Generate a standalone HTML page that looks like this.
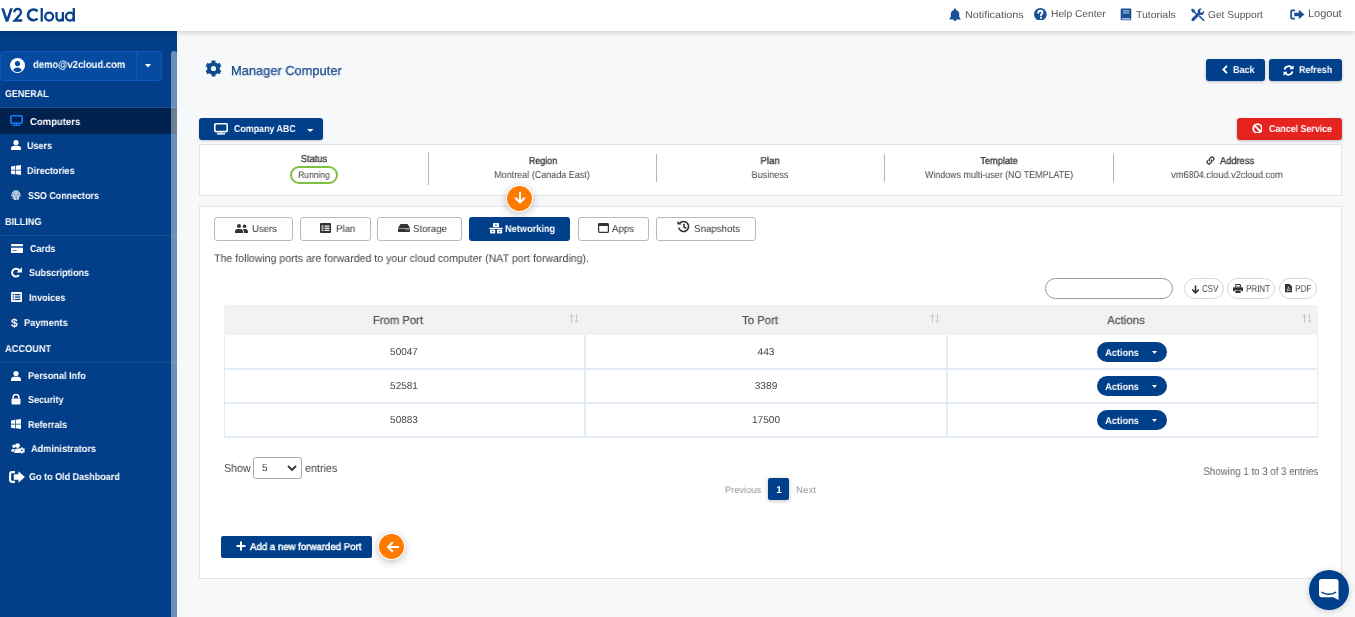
<!DOCTYPE html>
<html><head><meta charset="utf-8"><style>
html,body{margin:0;padding:0;}
body{width:1355px;height:617px;overflow:hidden;position:relative;background:#f7f8fa;font-family:"Liberation Sans", sans-serif;}
.t{font-family:"Liberation Sans", sans-serif;text-rendering:geometricPrecision;will-change:transform;}
svg{display:block;}
</style></head><body>
<div style="position:absolute;left:0px;top:0px;width:1355px;height:31px;background:#fff;box-shadow:0 1px 6px rgba(0,0,0,0.2);z-index:2;"></div><div style="position:absolute;left:0;top:0;width:1355px;height:31px;z-index:3;"><svg style="position:absolute;left:0px;top:0px;" width="80" height="31" viewBox="0 0 80 31"><g fill="none" stroke="#08438c" stroke-width="2.3"><path d="M14.3 12.3A3.35 3.35 0 0 1 21 12.2C21 13.6 20.3 14.5 19.3 15.5L14.7 20.5H22.2" stroke-linejoin="miter"/><path d="M37.5 11.3A5.4 5.4 0 1 0 37.5 18.5" stroke-width="2.6"/><circle cx="49.15" cy="16.55" r="3.95"/><path d="M56.5 11.9V17.3A3.2 3.2 0 0 0 62.9 17.3M62.9 11.9V21.6"/><circle cx="69.9" cy="16.55" r="3.95"/><path d="M73.8 8V21.6"/><path d="M41.75 8V21.6"/></g><path fill="#08438c" d="M1.2 8.3H3.9L7 17.4 10.1 8.3H12.8L8.3 21.7H5.7z"/></svg><svg style="position:absolute;left:949px;top:8px;" width="12" height="13" viewBox="0 0 12 13"><path fill="#1b4f96" d="M6 0.5c0.6 0 1 0.4 1 1v0.6c1.9 0.4 3.2 2 3.2 4v2.6l1.3 2v0.8H0.5v-0.8l1.3-2V6.1c0-2 1.3-3.6 3.2-4V1.5c0-0.6 0.4-1 1-1zM4.5 11.4h3c0 0.9-0.7 1.5-1.5 1.5s-1.5-0.6-1.5-1.5z"/></svg><div class="t" id="nav1" style="position:absolute;top:9.54px;font-size:10px;line-height:12.00px;color:#555;font-weight:400;white-space:nowrap;left:964.5px;transform-origin:left center;transform:scaleX(1.0777);">Notifications</div><svg style="position:absolute;left:1034px;top:7.7px;" width="12.7" height="12.7" viewBox="0 0 12 12"><circle cx="6" cy="6" r="6" fill="#1b4f96"/><path d="M4 4.5c0-1.2 0.9-1.9 2-1.9 1.2 0 2 0.8 2 1.7 0 1.3-1.4 1.4-1.4 2.5" stroke="#fff" stroke-width="1.8" fill="none" stroke-linecap="round"/><circle cx="6.6" cy="9.2" r="1" fill="#fff"/></svg><div class="t" id="nav2" style="position:absolute;top:9.04px;font-size:10px;line-height:12.00px;color:#555;font-weight:400;white-space:nowrap;left:1050.5px;transform-origin:left center;transform:scaleX(1.0251);">Help Center</div><svg style="position:absolute;left:1120px;top:7.5px;" width="12" height="13" viewBox="0 0 12 14"><path fill="#1b4f96" d="M1.5 0.5h9.5c0.4 0 0.7 0.3 0.7 0.7v10c0 0.3-0.2 0.5-0.4 0.6v0.9c0.2 0.1 0.4 0.3 0.4 0.6H1.8C0.9 13.3 0.3 12.6 0.3 11.8V1.7C0.3 1 0.8 0.5 1.5 0.5z"/><rect x="2.6" y="2.4" width="7" height="1.3" fill="#9fb6d6"/><rect x="2.6" y="4.6" width="7" height="1.3" fill="#9fb6d6"/><rect x="1.6" y="11.2" width="9" height="1.1" fill="#fff"/></svg><div class="t" id="nav3" style="position:absolute;top:9.54px;font-size:10px;line-height:12.00px;color:#555;font-weight:400;white-space:nowrap;left:1135.7px;transform-origin:left center;transform:scaleX(1.0452);">Tutorials</div><svg style="position:absolute;left:1191px;top:7.5px;" width="14" height="13" viewBox="0 0 14 13"><g fill="#1b4f96"><path d="M1.2 0.5l2.6 1.6 0.3 1.6 3.4 3.4-1 1L3.1 4.7 1.5 4.4 0 1.8z"/><path d="M10.8 0.6c-1.3-0.4-2.8 0-3.6 1.1-0.7 0.9-0.8 2-0.4 3L0.9 10.6c-0.6 0.6-0.6 1.5 0 2.1s1.5 0.6 2.1 0l5.9-5.9c1 0.4 2.1 0.3 3-0.4 1.1-0.8 1.5-2.3 1.1-3.6L11 4.8 9.4 4.4 9 2.8z"/><path d="M7.6 8.4l1.1-1.1 4.6 4.6c0.3 0.3 0.3 0.8 0 1.1s-0.8 0.3-1.1 0z"/></g></svg><div class="t" id="nav4" style="position:absolute;top:9.54px;font-size:10px;line-height:12.00px;color:#555;font-weight:400;white-space:nowrap;left:1208px;transform-origin:left center;transform:scaleX(1.0181);">Get Support</div><svg style="position:absolute;left:1290px;top:8.5px;" width="15" height="11" viewBox="0 0 15 11"><g fill="#1b4f96"><path d="M5 0.5H2C1 0.5 0.3 1.2 0.3 2.2v6.6c0 1 0.7 1.7 1.7 1.7h3V8.8H2.3C2.1 8.8 2 8.6 2 8.4V2.6c0-0.2 0.1-0.4 0.3-0.4H5z"/><path d="M8.8 0.7l5.6 4.8-5.6 4.8V7.3H4.2V3.7h4.6z"/></g></svg><div class="t" id="nav5" style="position:absolute;top:7.59px;font-size:11px;line-height:13.20px;color:#555;font-weight:400;white-space:nowrap;left:1308px;transform-origin:left center;transform:scaleX(0.9864);">Logout</div></div><div style="position:absolute;left:0px;top:31px;width:171px;height:586px;background:#023f88;"></div><div style="position:absolute;left:171px;top:31px;width:6px;height:586px;background:#023f88;"></div><div style="position:absolute;left:0px;top:51px;width:160px;height:28px;background:#064b9f;border:1px solid #0b58b8;border-radius:3px;box-sizing:content-box;"></div><div style="position:absolute;left:136px;top:52px;width:1px;height:28px;background:#0d58b8;"></div><svg style="position:absolute;left:10px;top:57.5px;" width="15" height="15" viewBox="0 0 15 15"><circle cx="7.5" cy="7.5" r="7.5" fill="#fff"/><circle cx="7.5" cy="5.6" r="2.6" fill="#064b9f"/><path d="M3.2 12.2c0.8-1.8 2.4-2.7 4.3-2.7s3.5 0.9 4.3 2.7C10.7 13.3 9.2 14 7.5 14S4.3 13.3 3.2 12.2z" fill="#064b9f"/></svg><div class="t" id="user" style="position:absolute;top:59.06px;font-size:10.5px;line-height:12.60px;color:#fff;font-weight:700;white-space:nowrap;left:33.2px;transform-origin:left center;transform:scaleX(0.9010);">demo@v2cloud.com</div><svg style="position:absolute;left:145px;top:63.5px;" width="6" height="4" viewBox="0 0 6 4"><path d="M0 0h6L3 3.5z" fill="#fff"/></svg><div class="t" id="general" style="position:absolute;top:88.53px;font-size:10px;line-height:12.00px;color:#fff;font-weight:700;white-space:nowrap;left:5.3px;transform-origin:left center;transform:scaleX(0.8915);">GENERAL</div><div style="position:absolute;left:0px;top:107px;width:177px;height:1px;background:rgba(255,255,255,0.10);"></div><div style="position:absolute;left:0px;top:108px;width:177px;height:26px;background:#01224f;"></div><svg style="position:absolute;left:10px;top:115px;" width="13" height="11" viewBox="0 0 13 11"><rect x="0.8" y="0.8" width="11.4" height="7.4" rx="1" fill="none" stroke="#1a7cff" stroke-width="1.6"/><rect x="2.5" y="9.6" width="8" height="1.3" fill="#1a7cff"/><rect x="6" y="8.5" width="1" height="1.5" fill="#1a7cff"/></svg><div class="t" id="s_comp" style="position:absolute;top:116.53px;font-size:10px;line-height:12.00px;color:#fff;font-weight:700;white-space:nowrap;left:30px;transform-origin:left center;transform:scaleX(0.9508);">Computers</div><svg style="position:absolute;left:11px;top:140px;" width="10" height="10" viewBox="0 0 10 10"><circle cx="5" cy="2.6" r="2.6" fill="#fff"/><path d="M0 10V8.6C0 6.9 1.3 5.8 3 5.8h4c1.7 0 3 1.1 3 2.8V10z" fill="#fff"/></svg><div class="t" id="s_users" style="position:absolute;top:140.53px;font-size:10px;line-height:12.00px;color:#fff;font-weight:700;white-space:nowrap;left:27.3px;transform-origin:left center;transform:scaleX(0.9025);">Users</div><svg style="position:absolute;left:11px;top:165px;" width="10" height="10" viewBox="0 0 10 10"><path fill="#fff" d="M0 1.4l4.1-0.6v4H0zM4.8 0.7L10 0v4.8H4.8zM0 5.4h4.1v4L0 8.8zM4.8 5.4H10V10l-5.2-0.7z"/></svg><div class="t" id="s_dir" style="position:absolute;top:165.53px;font-size:10px;line-height:12.00px;color:#fff;font-weight:700;white-space:nowrap;left:27.3px;transform-origin:left center;transform:scaleX(0.9110);">Directories</div><svg style="position:absolute;left:11px;top:190px;" width="10" height="10" viewBox="0 0 10 10"><g fill="none" stroke="#fff" stroke-width="1" stroke-linecap="round"><path d="M1.2 3.2C2 1.7 3.4 0.8 5 0.8s3 0.9 3.8 2.4"/><path d="M0.8 6C0.8 3.7 2.7 2 5 2s4.2 1.7 4.2 4"/><path d="M2 8.6C2.2 7.8 2.2 6.8 2.2 6c0-1.5 1.2-2.8 2.8-2.8S7.8 4.5 7.8 6c0 1 0 2.2-0.3 3.2"/><path d="M3.4 9.4C3.6 8.4 3.6 7 3.6 6c0-0.8 0.6-1.4 1.4-1.4S6.4 5.2 6.4 6c0 1.2 0 2.6-0.4 3.8"/><path d="M5 6c0 1.4 0 2.6-0.4 3.8"/></g></svg><div class="t" id="s_sso" style="position:absolute;top:190.53px;font-size:10px;line-height:12.00px;color:#fff;font-weight:700;white-space:nowrap;left:28.3px;transform-origin:left center;transform:scaleX(0.8922);">SSO Connectors</div><div class="t" id="billing" style="position:absolute;top:216.53px;font-size:10px;line-height:12.00px;color:#fff;font-weight:700;white-space:nowrap;left:5.3px;transform-origin:left center;transform:scaleX(0.9125);">BILLING</div><div style="position:absolute;left:0px;top:235px;width:177px;height:1px;background:rgba(255,255,255,0.07);"></div><svg style="position:absolute;left:11px;top:244px;" width="12" height="9" viewBox="0 0 12 9"><path fill="#fff" d="M1 0h10c0.6 0 1 0.4 1 1v1.2H0V1c0-0.6 0.4-1 1-1zM0 3.8h12V8c0 0.6-0.4 1-1 1H1C0.4 9 0 8.6 0 8z"/><rect x="1.5" y="6" width="2" height="0.8" fill="#023f88"/><rect x="4" y="6" width="1.5" height="0.8" fill="#023f88"/></svg><div class="t" id="s_cards" style="position:absolute;top:243.53px;font-size:10px;line-height:12.00px;color:#fff;font-weight:700;white-space:nowrap;left:30px;transform-origin:left center;transform:scaleX(0.8956);">Cards</div><svg style="position:absolute;left:11px;top:265.5px;" width="12" height="12" viewBox="0 0 12 12"><path d="M8.38 4.65A3.9 3.9 0 1 0 7.99 9.1" fill="none" stroke="#fff" stroke-width="2"/><path d="M10.9 1.3V6.6H5.6z" fill="#fff"/></svg><div class="t" id="s_subs" style="position:absolute;top:267.54px;font-size:10px;line-height:12.00px;color:#fff;font-weight:700;white-space:nowrap;left:28.5px;transform-origin:left center;transform:scaleX(0.9012);">Subscriptions</div><svg style="position:absolute;left:11px;top:292px;" width="11" height="10" viewBox="0 0 11 10"><rect x="0" y="0" width="11" height="10" rx="1" fill="#fff"/><g fill="#023f88"><rect x="1.6" y="2" width="1.4" height="1.3"/><rect x="3.8" y="2" width="5.6" height="1.3"/><rect x="1.6" y="4.4" width="1.4" height="1.3"/><rect x="3.8" y="4.4" width="5.6" height="1.3"/><rect x="1.6" y="6.8" width="1.4" height="1.3"/><rect x="3.8" y="6.8" width="5.6" height="1.3"/></g></svg><div class="t" id="s_inv" style="position:absolute;top:292.54px;font-size:10px;line-height:12.00px;color:#fff;font-weight:700;white-space:nowrap;left:28.5px;transform-origin:left center;transform:scaleX(0.9068);">Invoices</div><div class="t" id="s_dollar" style="position:absolute;top:315.64px;font-size:12px;line-height:14.40px;color:#fff;font-weight:700;white-space:nowrap;left:11px;">$</div><div class="t" id="s_pay" style="position:absolute;top:317.54px;font-size:10px;line-height:12.00px;color:#fff;font-weight:700;white-space:nowrap;left:24.3px;transform-origin:left center;transform:scaleX(0.9249);">Payments</div><div class="t" id="account" style="position:absolute;top:343.54px;font-size:10px;line-height:12.00px;color:#fff;font-weight:700;white-space:nowrap;left:5.2px;transform-origin:left center;transform:scaleX(0.9220);">ACCOUNT</div><div style="position:absolute;left:0px;top:361.5px;width:177px;height:1px;background:rgba(255,255,255,0.07);"></div><svg style="position:absolute;left:11px;top:371px;" width="10" height="10" viewBox="0 0 10 10"><circle cx="5" cy="2.6" r="2.6" fill="#fff"/><path d="M0 10V8.6C0 6.9 1.3 5.8 3 5.8h4c1.7 0 3 1.1 3 2.8V10z" fill="#fff"/></svg><div class="t" id="s_pi" style="position:absolute;top:370.54px;font-size:10px;line-height:12.00px;color:#fff;font-weight:700;white-space:nowrap;left:27.5px;transform-origin:left center;transform:scaleX(0.9123);">Personal Info</div><svg style="position:absolute;left:11px;top:394px;" width="10" height="11" viewBox="0 0 10 11"><path d="M2.2 4.6V3.2C2.2 1.6 3.4 0.5 5 0.5s2.8 1.1 2.8 2.7v1.4" fill="none" stroke="#fff" stroke-width="1.6"/><rect x="0.5" y="4.6" width="9" height="6" rx="1" fill="#fff"/></svg><div class="t" id="s_sec" style="position:absolute;top:394.54px;font-size:10px;line-height:12.00px;color:#fff;font-weight:700;white-space:nowrap;left:27.5px;transform-origin:left center;transform:scaleX(0.8994);">Security</div><svg style="position:absolute;left:11px;top:419px;" width="10" height="10" viewBox="0 0 10 10"><path fill="#fff" d="M0 1.4l4.1-0.6v4H0zM4.8 0.7L10 0v4.8H4.8zM0 5.4h4.1v4L0 8.8zM4.8 5.4H10V10l-5.2-0.7z"/></svg><div class="t" id="s_ref" style="position:absolute;top:419.54px;font-size:10px;line-height:12.00px;color:#fff;font-weight:700;white-space:nowrap;left:27.5px;transform-origin:left center;transform:scaleX(0.9018);">Referrals</div><svg style="position:absolute;left:10.5px;top:443px;" width="14" height="10.5" viewBox="0 0 14 10.5"><g fill="#fff"><circle cx="3" cy="3.2" r="1.7"/><circle cx="6.6" cy="2.6" r="2.4"/><path d="M0 8.6C0 7 0.9 6 2.2 6h1.6C3.2 6.8 2.9 7.8 2.9 8.8z"/><path d="M3.4 10V8.8c0-1.9 1.2-3.2 3-3.2h1.5c0.8 0 1.4 0.2 1.9 0.6-0.6 0.9-0.9 2-0.6 3.1 0.1 0.3 0.2 0.5 0.3 0.7z"/></g><g transform="translate(10.9 7.4)"><circle r="2.5" fill="#fff"/><g stroke="#fff" stroke-width="1.3"><path d="M0 -3.1V3.1M-2.7 -1.55L2.7 1.55M-2.7 1.55L2.7 -1.55"/></g><circle r="0.8" fill="#023f88"/></g></svg><div class="t" id="s_adm" style="position:absolute;top:443.54px;font-size:10px;line-height:12.00px;color:#fff;font-weight:700;white-space:nowrap;left:31.2px;transform-origin:left center;transform:scaleX(0.9139);">Administrators</div><svg style="position:absolute;left:9px;top:470.5px;" width="16" height="12" viewBox="0 0 16 12"><path d="M6 1.1H3.2C2 1.1 1.1 2 1.1 3.2v5.6c0 1.2 0.9 2.1 2.1 2.1H6" fill="none" stroke="#fff" stroke-width="2.1"/><path fill="#fff" d="M4.8 3.3H9.4V0.2L15.9 6 9.4 11.8V8.7H4.8z"/></svg><div class="t" id="s_old" style="position:absolute;top:471.54px;font-size:10px;line-height:12.00px;color:#fff;font-weight:700;white-space:nowrap;left:29.3px;transform-origin:left center;transform:scaleX(0.9029);">Go to Old Dashboard</div><div style="position:absolute;left:171px;top:51px;width:6px;height:566px;background:rgba(255,255,255,0.42);border-radius:3px 3px 0 0;"></div><svg style="position:absolute;left:205px;top:60px;" width="17" height="17" viewBox="0 0 17 17"><path fill="#0d4a8e" fill-rule="evenodd" d="M5.30 2.96 L6.64 2.38 L6.56 0.43 L10.44 0.43 L10.36 2.38 L11.70 2.96 L12.87 3.83 L14.52 2.79 L16.46 6.14 L14.73 7.05 L14.90 8.50 L14.73 9.95 L16.46 10.86 L14.52 14.21 L12.87 13.17 L11.70 14.04 L10.36 14.62 L10.44 16.57 L6.56 16.57 L6.64 14.62 L5.30 14.04 L4.13 13.17 L2.48 14.21 L0.54 10.86 L2.27 9.95 L2.10 8.50 L2.27 7.05 L0.54 6.14 L2.48 2.79 L4.13 3.83Z M8.5 5.9A2.6 2.6 0 1 0 8.5 11.1A2.6 2.6 0 1 0 8.5 5.9Z"/></svg><div class="t" id="title" style="position:absolute;top:62.70px;font-size:13px;line-height:15.60px;color:#16498c;font-weight:400;white-space:nowrap;-webkit-text-stroke:0.25px #16498c;left:231px;transform-origin:left center;transform:scaleX(0.9884);">Manager Computer</div><div style="position:absolute;left:1206px;top:59px;width:59px;height:22px;background:#003f8a;border-radius:3px;box-shadow:0 1px 3px rgba(0,0,0,0.25);"></div><svg style="position:absolute;left:1222px;top:65px;" width="6" height="9" viewBox="0 0 6 9"><path d="M5 0.8L1.3 4.5 5 8.2" fill="none" stroke="#fff" stroke-width="1.9"/></svg><div class="t" id="back" style="position:absolute;top:64.53px;font-size:10px;line-height:12.00px;color:#fff;font-weight:700;white-space:nowrap;left:1233.2px;transform-origin:left center;transform:scaleX(0.9035);">Back</div><div style="position:absolute;left:1269px;top:59px;width:73px;height:22px;background:#003f8a;border-radius:3px;box-shadow:0 1px 3px rgba(0,0,0,0.25);"></div><svg style="position:absolute;left:1283px;top:64.5px;" width="11" height="11" viewBox="0 0 11 11"><g fill="none" stroke="#fff" stroke-width="1.8"><path d="M1.6 4.6A4 4 0 0 1 9 3.2"/><path d="M9.4 6.4A4 4 0 0 1 2 7.8"/></g><path d="M10.5 0.3v4H6.5z" fill="#fff"/><path d="M0.5 10.7v-4h4z" fill="#fff"/></svg><div class="t" id="refresh" style="position:absolute;top:64.53px;font-size:10px;line-height:12.00px;color:#fff;font-weight:700;white-space:nowrap;left:1299px;transform-origin:left center;transform:scaleX(0.8913);">Refresh</div><div style="position:absolute;left:199px;top:118px;width:124px;height:22px;background:#003f8a;border-radius:3px;box-shadow:0 1px 2px rgba(0,0,0,0.2);"></div><svg style="position:absolute;left:214px;top:123px;" width="14" height="12" viewBox="0 0 14 12"><rect x="0.8" y="0.8" width="12.4" height="7.8" rx="1" fill="none" stroke="#fff" stroke-width="1.6"/><rect x="3" y="10.2" width="8" height="1.4" fill="#fff"/><rect x="6.5" y="9" width="1" height="1.5" fill="#fff"/></svg><div class="t" id="company" style="position:absolute;top:123.53px;font-size:10px;line-height:12.00px;color:#fff;font-weight:700;white-space:nowrap;left:234.2px;transform-origin:left center;transform:scaleX(0.8845);">Company ABC</div><svg style="position:absolute;left:307px;top:128.5px;" width="6.5" height="3" viewBox="0 0 6.5 3"><path d="M0 0h6.5L3.25 3z" fill="#fff"/></svg><div style="position:absolute;left:1237px;top:118px;width:105px;height:22px;background:#e52420;border-radius:3px;box-shadow:0 1px 3px rgba(0,0,0,0.25);"></div><svg style="position:absolute;left:1251.5px;top:122.5px;" width="10.5" height="10.5" viewBox="0 0 10.5 10.5"><circle cx="5.5" cy="5.5" r="4.3" fill="none" stroke="#fff" stroke-width="1.8"/><path d="M2.5 2.5l6 6" stroke="#fff" stroke-width="1.8"/></svg><div class="t" id="cancel" style="position:absolute;top:123.53px;font-size:10px;line-height:12.00px;color:#fff;font-weight:700;white-space:nowrap;left:1268.9px;transform-origin:left center;transform:scaleX(0.8852);">Cancel Service</div><div style="position:absolute;left:199px;top:144px;width:1141px;height:50px;background:#fff;border:1px solid #e4e4e4;"></div><div style="position:absolute;left:428px;top:152px;width:1px;height:33px;background:#b5b5b5;"></div><div style="position:absolute;left:656px;top:154px;width:1px;height:28px;background:#b5b5b5;"></div><div style="position:absolute;left:884px;top:154px;width:1px;height:28px;background:#b5b5b5;"></div><div style="position:absolute;left:1113px;top:154px;width:1px;height:28px;background:#b5b5b5;"></div><div class="t" id="st" style="position:absolute;top:153.53px;font-size:10px;line-height:12.00px;color:#2a2a2a;font-weight:400;white-space:nowrap;-webkit-text-stroke:0.25px #2a2a2a;left:313.85px;transform-origin:center center;transform:translateX(-50%) scaleX(0.9309);">Status</div><div style="position:absolute;left:290px;top:166px;width:48px;height:18px;border:2px solid #7dc142;border-radius:10px;box-sizing:border-box;background:#fff;"></div><div class="t" id="run" style="position:absolute;top:170.01px;font-size:9.5px;line-height:11.40px;color:#444;font-weight:400;white-space:nowrap;left:314.05px;transform-origin:center center;transform:translateX(-50%) scaleX(0.8929);">Running</div><div class="t" id="reg" style="position:absolute;top:155.53px;font-size:10px;line-height:12.00px;color:#2a2a2a;font-weight:400;white-space:nowrap;-webkit-text-stroke:0.25px #2a2a2a;left:542.55px;transform-origin:center center;transform:translateX(-50%) scaleX(0.8895);">Region</div><div class="t" id="reg2" style="position:absolute;top:169.53px;font-size:10px;line-height:12.00px;color:#444;font-weight:400;white-space:nowrap;left:542.4px;transform-origin:center center;transform:translateX(-50%) scaleX(0.9014);">Montreal (Canada East)</div><div class="t" id="plan" style="position:absolute;top:155.53px;font-size:10px;line-height:12.00px;color:#2a2a2a;font-weight:400;white-space:nowrap;-webkit-text-stroke:0.25px #2a2a2a;left:770.4px;transform-origin:center center;transform:translateX(-50%) scaleX(0.9543);">Plan</div><div class="t" id="plan2" style="position:absolute;top:169.53px;font-size:10px;line-height:12.00px;color:#444;font-weight:400;white-space:nowrap;left:770.4px;transform-origin:center center;transform:translateX(-50%) scaleX(0.9143);">Business</div><div class="t" id="tmpl" style="position:absolute;top:155.53px;font-size:10px;line-height:12.00px;color:#2a2a2a;font-weight:400;white-space:nowrap;-webkit-text-stroke:0.25px #2a2a2a;left:999.4px;transform-origin:center center;transform:translateX(-50%) scaleX(0.9241);">Template</div><div class="t" id="tmpl2" style="position:absolute;top:169.53px;font-size:10px;line-height:12.00px;color:#444;font-weight:400;white-space:nowrap;left:998.95px;transform-origin:center center;transform:translateX(-50%) scaleX(0.8910);">Windows multi-user (NO TEMPLATE)</div><svg style="position:absolute;left:1206px;top:156px;" width="9" height="9" viewBox="0 0 9 9"><g fill="none" stroke="#333" stroke-width="1.3"><path d="M3.8 5.2a1.8 1.8 0 0 1 0-2.5l1.3-1.3a1.8 1.8 0 0 1 2.5 2.5l-0.7 0.7"/><path d="M5.2 3.8a1.8 1.8 0 0 1 0 2.5L3.9 7.6a1.8 1.8 0 0 1-2.5-2.5l0.7-0.7"/></g></svg><div class="t" id="addr" style="position:absolute;top:155.53px;font-size:10px;line-height:12.00px;color:#2a2a2a;font-weight:400;white-space:nowrap;-webkit-text-stroke:0.25px #2a2a2a;left:1220.2px;transform-origin:left center;transform:scaleX(0.9295);">Address</div><div class="t" id="addr2" style="position:absolute;top:169.53px;font-size:10px;line-height:12.00px;color:#444;font-weight:400;white-space:nowrap;left:1227.35px;transform-origin:center center;transform:translateX(-50%) scaleX(0.9225);">vm6804.cloud.v2cloud.com</div><div style="position:absolute;left:199px;top:206px;width:1141px;height:371px;background:#fff;border:1px solid #e4e4e4;"></div><div style="position:absolute;left:214px;top:217px;width:79px;height:24px;background:#fff;border:1px solid #b9b9b9;border-radius:3px;box-sizing:border-box;"></div><div style="position:absolute;left:300px;top:217px;width:71px;height:24px;background:#fff;border:1px solid #b9b9b9;border-radius:3px;box-sizing:border-box;"></div><div style="position:absolute;left:377px;top:217px;width:85px;height:24px;background:#fff;border:1px solid #b9b9b9;border-radius:3px;box-sizing:border-box;"></div><div style="position:absolute;left:469px;top:217px;width:101px;height:24px;background:#003f8a;border-radius:3px;box-sizing:border-box;"></div><div style="position:absolute;left:578px;top:217px;width:71px;height:24px;background:#fff;border:1px solid #b9b9b9;border-radius:3px;box-sizing:border-box;"></div><div style="position:absolute;left:656px;top:217px;width:100px;height:24px;background:#fff;border:1px solid #b9b9b9;border-radius:3px;box-sizing:border-box;"></div><svg style="position:absolute;left:235px;top:224px;" width="13" height="9" viewBox="0 0 13 9"><g fill="#333"><circle cx="4" cy="2" r="2"/><circle cx="9.5" cy="2.2" r="1.8"/><path d="M0 9V7.6C0 6 1 5 2.5 5h3C7 5 8 6 8 7.6V9z"/><path d="M8.8 9V7.6c0-1-0.3-1.8-0.9-2.5h2.6c1.4 0 2.5 1 2.5 2.4V9z"/></g></svg><div class="t" id="tab_users" style="position:absolute;top:223.53px;font-size:10px;line-height:12.00px;color:#333;font-weight:400;white-space:nowrap;left:252.2px;transform-origin:left center;transform:scaleX(0.9569);">Users</div><svg style="position:absolute;left:320px;top:223px;" width="11" height="10" viewBox="0 0 11 10"><rect x="0" y="0" width="11" height="10" rx="1" fill="#333"/><g fill="#fff"><rect x="1.5" y="2.5" width="2" height="1.2"/><rect x="4.5" y="2.5" width="5" height="1.2"/><rect x="1.5" y="4.6" width="2" height="1.2"/><rect x="4.5" y="4.6" width="5" height="1.2"/><rect x="1.5" y="6.7" width="2" height="1.2"/><rect x="4.5" y="6.7" width="5" height="1.2"/></g></svg><div class="t" id="tab_plan" style="position:absolute;top:223.53px;font-size:10px;line-height:12.00px;color:#333;font-weight:400;white-space:nowrap;left:335.6px;transform-origin:left center;transform:scaleX(0.9593);">Plan</div><svg style="position:absolute;left:398px;top:224px;" width="12" height="8" viewBox="0 0 12 8"><path fill="#333" d="M2.5 0h7L12 4v3c0 0.6-0.4 1-1 1H1C0.4 8 0 7.6 0 7V4z"/><rect x="8" y="5.3" width="0.9" height="0.9" fill="#fff"/><rect x="9.8" y="5.3" width="0.9" height="0.9" fill="#fff"/><rect x="0" y="4" width="12" height="0.5" fill="#fff"/></svg><div class="t" id="tab_storage" style="position:absolute;top:223.53px;font-size:10px;line-height:12.00px;color:#333;font-weight:400;white-space:nowrap;left:412.6px;transform-origin:left center;transform:scaleX(0.9706);">Storage</div><svg style="position:absolute;left:489px;top:222px;" width="14" height="12" viewBox="0 0 14 12"><g fill="#fff"><rect x="4" y="1" width="6" height="4.2" rx="0.6"/><rect x="0.2" y="5.7" width="13.6" height="1.3" rx="0.5"/><rect x="1" y="7.5" width="5.2" height="3.9" rx="0.6"/><rect x="8" y="7.5" width="5.2" height="3.9" rx="0.6"/></g><g fill="#003f8a"><ellipse cx="7" cy="3" rx="1.1" ry="0.6"/><circle cx="3.6" cy="9.6" r="0.7"/><circle cx="10.6" cy="9.6" r="0.7"/></g></svg><div class="t" id="tab_net" style="position:absolute;top:223.53px;font-size:10px;line-height:12.00px;color:#fff;font-weight:700;white-space:nowrap;left:505.2px;transform-origin:left center;transform:scaleX(0.9201);">Networking</div><svg style="position:absolute;left:598px;top:223px;" width="11" height="10" viewBox="0 0 11 10"><rect x="0.6" y="0.6" width="9.8" height="8.8" rx="1" fill="none" stroke="#333" stroke-width="1.2"/><rect x="0.6" y="0.6" width="9.8" height="2.4" fill="#333"/></svg><div class="t" id="tab_apps" style="position:absolute;top:223.53px;font-size:10px;line-height:12.00px;color:#333;font-weight:400;white-space:nowrap;left:612px;transform-origin:left center;transform:scaleX(0.9694);">Apps</div><svg style="position:absolute;left:677.3px;top:219.9px;" width="13" height="13" viewBox="0 0 13 13"><g fill="none" stroke="#333" stroke-width="1.6"><path d="M2.6 3.4A5 5 0 1 1 1.7 7.6"/><path d="M7 3.8v3.2l2.2 1.4"/></g><path d="M0.4 0.9l4.2 3.6H0.4z" fill="#333"/></svg><div class="t" id="tab_snap" style="position:absolute;top:223.53px;font-size:10px;line-height:12.00px;color:#333;font-weight:400;white-space:nowrap;left:694.3px;transform-origin:left center;transform:scaleX(0.9732);">Snapshots</div><div style="position:absolute;left:505.6px;top:184.7px;width:27.8px;height:27.8px;border-radius:50%;background:#fff;box-shadow:0 2px 9px rgba(0,0,0,0.25);"></div><div style="position:absolute;left:507px;top:186.1px;width:25px;height:25px;border-radius:50%;background:#ff7a00;"></div><svg style="position:absolute;left:513.5px;top:192px;" width="12" height="12" viewBox="0 0 12 12"><path d="M6 1v9.5M1.8 6.3L6 10.5l4.2-4.2" fill="none" stroke="#fff" stroke-width="2.1" stroke-linecap="round" stroke-linejoin="round"/></svg><div class="t" id="desc" style="position:absolute;top:252.59px;font-size:11px;line-height:13.20px;color:#444;font-weight:400;white-space:nowrap;left:214.2px;transform-origin:left center;transform:scaleX(0.9639);">The following ports are forwarded to your cloud computer (NAT port forwarding).</div><div style="position:absolute;left:1045px;top:278px;width:128px;height:21px;border:1px solid #999;border-radius:11px;box-sizing:border-box;background:#fff;"></div><div style="position:absolute;left:1184px;top:278px;width:40px;height:21px;border:1px solid #d6d6d6;border-radius:11px;box-sizing:border-box;background:#fff;"></div><div style="position:absolute;left:1227px;top:278px;width:48px;height:21px;border:1px solid #d6d6d6;border-radius:11px;box-sizing:border-box;background:#fff;"></div><div style="position:absolute;left:1279px;top:278px;width:38px;height:21px;border:1px solid #d6d6d6;border-radius:11px;box-sizing:border-box;background:#fff;"></div><svg style="position:absolute;left:1190.5px;top:284.5px;" width="9" height="9" viewBox="0 0 9 9"><path d="M4.5 0.5v7.2M1.2 4.5l3.3 3.3 3.3-3.3" fill="none" stroke="#333" stroke-width="1.6"/></svg><div class="t" id="csv" style="position:absolute;top:283.54px;font-size:10px;line-height:12.00px;color:#444;font-weight:400;white-space:nowrap;left:1202.3px;transform-origin:left center;transform:scaleX(0.7878);">CSV</div><svg style="position:absolute;left:1233px;top:284px;" width="10" height="9" viewBox="0 0 10 9"><g fill="#333"><path d="M2.3 0h4.8L8 0.9V3H2.3z"/><path d="M1 3.2h8c0.6 0 1 0.4 1 1v3H8.3V6H1.7v1.2H0v-3c0-0.6 0.4-1 1-1z"/><rect x="2.4" y="6.4" width="5.2" height="2.6"/></g><rect x="3.2" y="1" width="3.6" height="1.6" fill="#fff"/></svg><div class="t" id="print" style="position:absolute;top:283.54px;font-size:10px;line-height:12.00px;color:#444;font-weight:400;white-space:nowrap;left:1245.9px;transform-origin:left center;transform:scaleX(0.8000);">PRINT</div><svg style="position:absolute;left:1285.2px;top:284.3px;" width="7" height="8.3" viewBox="0 0 7 8.3"><path fill="#333" d="M0 0h4.5L7 2.5V8.3H0z"/><path d="M2 6.8c0.8-1.6 1.2-2.8 1.4-4 0.4 1.6 1 2.6 2.2 3.4-1.2-0.1-2.4 0.1-3.6 0.6z" fill="none" stroke="#fff" stroke-width="0.6"/></svg><div class="t" id="pdf" style="position:absolute;top:283.54px;font-size:10px;line-height:12.00px;color:#444;font-weight:400;white-space:nowrap;left:1295.3px;transform-origin:left center;transform:scaleX(0.8100);">PDF</div><div style="position:absolute;left:224px;top:305px;width:1094px;height:30px;background:#f2f2f2;border-radius:3px 3px 0 0;"></div><div style="position:absolute;left:224px;top:335px;width:1px;height:102px;background:#e3ebf4;"></div><div style="position:absolute;left:1317px;top:335px;width:1px;height:102px;background:#e3ebf4;"></div><div style="position:absolute;left:584px;top:335px;width:2px;height:102px;background:#e3ebf4;"></div><div style="position:absolute;left:946px;top:335px;width:2px;height:102px;background:#e3ebf4;"></div><div style="position:absolute;left:224px;top:368px;width:1094px;height:2px;background:#e3ebf4;"></div><div style="position:absolute;left:224px;top:402px;width:1094px;height:2px;background:#e3ebf4;"></div><div style="position:absolute;left:224px;top:436px;width:1094px;height:1.5px;background:#e3ebf4;"></div><div class="t" id="th1" style="position:absolute;top:315.12px;font-size:11.5px;line-height:13.80px;color:#555;font-weight:400;white-space:nowrap;-webkit-text-stroke:0.25px #555;left:398.25px;transform-origin:center center;transform:translateX(-50%) scaleX(0.9819);">From Port</div><div class="t" id="th2" style="position:absolute;top:315.12px;font-size:11.5px;line-height:13.80px;color:#555;font-weight:400;white-space:nowrap;-webkit-text-stroke:0.25px #555;left:759.8px;transform-origin:center center;transform:translateX(-50%) scaleX(0.9852);">To Port</div><div class="t" id="th3" style="position:absolute;top:315.12px;font-size:11.5px;line-height:13.80px;color:#555;font-weight:400;white-space:nowrap;-webkit-text-stroke:0.25px #555;left:1126px;transform-origin:center center;transform:translateX(-50%) scaleX(0.9995);">Actions</div><svg style="position:absolute;left:568.5px;top:313.5px;" width="10" height="9" viewBox="0 0 10 9"><g fill="none" stroke="#c8c8c8" stroke-width="1"><path d="M2.5 9V0.8M0.6 2.7l1.9-1.9 1.9 1.9"/><path d="M7.5 0v8.2M5.6 6.3l1.9 1.9 1.9-1.9"/></g></svg><svg style="position:absolute;left:930px;top:313.5px;" width="10" height="9" viewBox="0 0 10 9"><g fill="none" stroke="#c8c8c8" stroke-width="1"><path d="M2.5 9V0.8M0.6 2.7l1.9-1.9 1.9 1.9"/><path d="M7.5 0v8.2M5.6 6.3l1.9 1.9 1.9-1.9"/></g></svg><svg style="position:absolute;left:1301.5px;top:313.5px;" width="10" height="9" viewBox="0 0 10 9"><g fill="none" stroke="#c8c8c8" stroke-width="1"><path d="M2.5 9V0.8M0.6 2.7l1.9-1.9 1.9 1.9"/><path d="M7.5 0v8.2M5.6 6.3l1.9 1.9 1.9-1.9"/></g></svg><div class="t" id="tx1" style="position:absolute;top:346.54px;font-size:10px;line-height:12.00px;color:#444;font-weight:400;white-space:nowrap;left:404.4px;transform-origin:center center;transform:translateX(-50%) scaleX(1.0031);">50047</div><div class="t" id="tx2" style="position:absolute;top:346.54px;font-size:10px;line-height:12.00px;color:#444;font-weight:400;white-space:nowrap;left:765.7px;transform-origin:center center;transform:translateX(-50%) scaleX(1.0247);">443</div><div style="position:absolute;left:1097px;top:342px;width:70px;height:20px;background:#003f8a;border-radius:10px;"></div><div class="t" id="tx3" style="position:absolute;top:347.54px;font-size:10px;line-height:12.00px;color:#fff;font-weight:700;white-space:nowrap;left:1121.5px;transform-origin:center center;transform:translateX(-50%) scaleX(0.9190);">Actions</div><svg style="position:absolute;left:1151.5px;top:350.5px;" width="5" height="3" viewBox="0 0 5 3"><path d="M0 0h5L2.5 3z" fill="#fff"/></svg><div class="t" id="tx4" style="position:absolute;top:380.54px;font-size:10px;line-height:12.00px;color:#444;font-weight:400;white-space:nowrap;left:404.4px;transform-origin:center center;transform:translateX(-50%) scaleX(1.0031);">52581</div><div class="t" id="tx5" style="position:absolute;top:380.54px;font-size:10px;line-height:12.00px;color:#444;font-weight:400;white-space:nowrap;left:765.7px;transform-origin:center center;transform:translateX(-50%) scaleX(1.0157);">3389</div><div style="position:absolute;left:1097px;top:376px;width:70px;height:20px;background:#003f8a;border-radius:10px;"></div><div class="t" id="tx6" style="position:absolute;top:381.54px;font-size:10px;line-height:12.00px;color:#fff;font-weight:700;white-space:nowrap;left:1121.5px;transform-origin:center center;transform:translateX(-50%) scaleX(0.9190);">Actions</div><svg style="position:absolute;left:1151.5px;top:384.5px;" width="5" height="3" viewBox="0 0 5 3"><path d="M0 0h5L2.5 3z" fill="#fff"/></svg><div class="t" id="tx7" style="position:absolute;top:414.54px;font-size:10px;line-height:12.00px;color:#444;font-weight:400;white-space:nowrap;left:404.4px;transform-origin:center center;transform:translateX(-50%) scaleX(1.0031);">50883</div><div class="t" id="tx8" style="position:absolute;top:414.54px;font-size:10px;line-height:12.00px;color:#444;font-weight:400;white-space:nowrap;left:765.7px;transform-origin:center center;transform:translateX(-50%) scaleX(1.0103);">17500</div><div style="position:absolute;left:1097px;top:410px;width:70px;height:20px;background:#003f8a;border-radius:10px;"></div><div class="t" id="tx9" style="position:absolute;top:415.54px;font-size:10px;line-height:12.00px;color:#fff;font-weight:700;white-space:nowrap;left:1121.5px;transform-origin:center center;transform:translateX(-50%) scaleX(0.9190);">Actions</div><svg style="position:absolute;left:1151.5px;top:418.5px;" width="5" height="3" viewBox="0 0 5 3"><path d="M0 0h5L2.5 3z" fill="#fff"/></svg><div class="t" id="show" style="position:absolute;top:463.12px;font-size:11.5px;line-height:13.80px;color:#444;font-weight:400;white-space:nowrap;left:223.5px;transform-origin:left center;transform:scaleX(0.9242);">Show</div><div style="position:absolute;left:253px;top:457px;width:49px;height:22px;border:1px solid #aaa;border-radius:3px;box-sizing:border-box;background:#fff;"></div><div class="t" id="tx10" style="position:absolute;top:462.54px;font-size:10px;line-height:12.00px;color:#444;font-weight:400;white-space:nowrap;left:261.5px;">5</div><svg style="position:absolute;left:287px;top:465px;" width="10" height="7" viewBox="0 0 10 7"><path d="M1 1l4 4 4-4" fill="none" stroke="#333" stroke-width="1.8"/></svg><div class="t" id="entries" style="position:absolute;top:463.12px;font-size:11.5px;line-height:13.80px;color:#444;font-weight:400;white-space:nowrap;left:304.8px;transform-origin:left center;transform:scaleX(0.9354);">entries</div><div class="t" id="showing" style="position:absolute;top:465.59px;font-size:11px;line-height:13.20px;color:#666;font-weight:400;white-space:nowrap;right:37.200000000000045px;transform-origin:right center;transform:scaleX(0.8814);">Showing 1 to 3 of 3 entries</div><div class="t" id="prev" style="position:absolute;top:485.01px;font-size:9.5px;line-height:11.40px;color:#999;font-weight:400;white-space:nowrap;left:742.5px;transform-origin:center center;transform:translateX(-50%) scaleX(0.9819);">Previous</div><div style="position:absolute;left:768px;top:478px;width:21px;height:22px;background:#003f8a;border-radius:2px;box-shadow:0 1px 4px rgba(0,0,0,0.25);"></div><div class="t" id="tx11" style="position:absolute;top:485.04px;font-size:10px;line-height:12.00px;color:#fff;font-weight:700;white-space:nowrap;left:778.5px;transform:translateX(-50%) ;">1</div><div class="t" id="next" style="position:absolute;top:485.01px;font-size:9.5px;line-height:11.40px;color:#999;font-weight:400;white-space:nowrap;left:806.45px;transform-origin:center center;transform:translateX(-50%) scaleX(1.0129);">Next</div><div style="position:absolute;left:221px;top:536px;width:151px;height:22px;background:#003f8a;border-radius:2px;"></div><svg style="position:absolute;left:236px;top:541px;" width="10" height="10" viewBox="0 0 10 10"><path d="M5 0.5v9M0.5 5h9" stroke="#fff" stroke-width="2"/></svg><div class="t" id="add" style="position:absolute;top:541.53px;font-size:10px;line-height:12.00px;color:#fff;font-weight:400;white-space:nowrap;-webkit-text-stroke:0.45px #fff;left:250.3px;transform-origin:left center;transform:scaleX(0.9635);">Add a new forwarded Port</div><div style="position:absolute;left:377.6px;top:532.6px;width:27.8px;height:27.8px;border-radius:50%;background:#fff;box-shadow:0 2px 9px rgba(0,0,0,0.25);"></div><div style="position:absolute;left:379px;top:534px;width:25px;height:25px;border-radius:50%;background:#ff7a00;"></div><svg style="position:absolute;left:385.5px;top:540.5px;" width="13" height="12" viewBox="0 0 13 12"><path d="M12 6H2M6.2 1.8L2 6l4.2 4.2" fill="none" stroke="#fff" stroke-width="2.1" stroke-linecap="round" stroke-linejoin="round"/></svg><div style="position:absolute;left:1309px;top:570px;width:40px;height:40px;border-radius:50%;background:#003f8a;box-shadow:0 1px 6px rgba(0,0,0,0.2);"></div><svg style="position:absolute;left:1319px;top:579px;" width="20" height="21" viewBox="0 0 20 21"><path d="M2.5 0h14.5c1.4 0 2.5 1.1 2.5 2.5V21l-5.2-2.8H2.5C1.1 18.2 0 17.1 0 15.7V2.5C0 1.1 1.1 0 2.5 0z" fill="#fff"/><path d="M3 13.3Q9.8 17.2 16.6 13.3" fill="none" stroke="#003f8a" stroke-width="1.5" stroke-linecap="round"/></svg>
</body></html>
